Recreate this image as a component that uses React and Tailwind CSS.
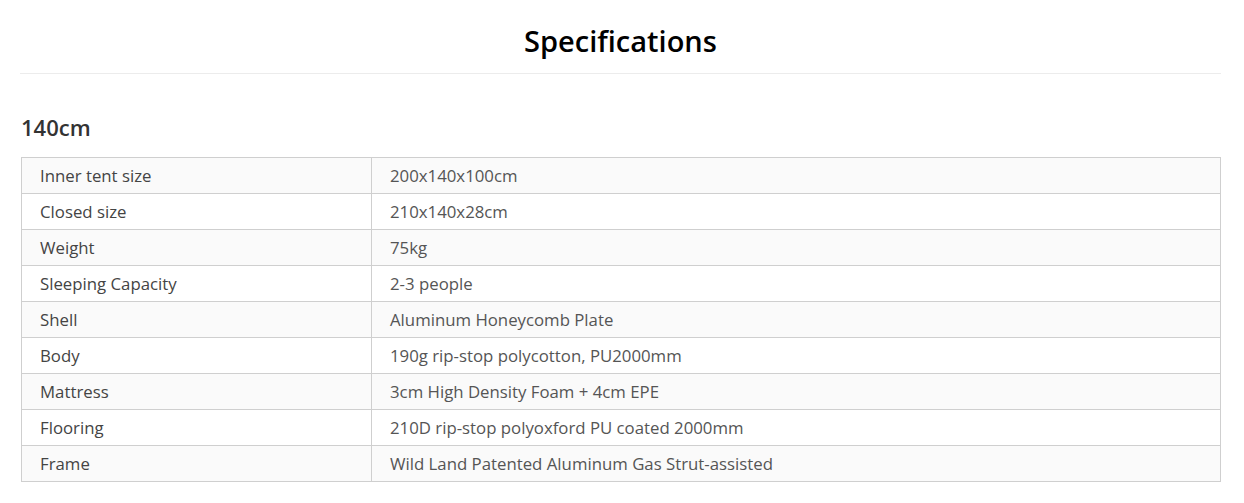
const rows = [
  ['Inner tent size', '200x140x100cm'],
  ['Closed size', '210x140x28cm'],
  ['Weight', '75kg'],
  ['Sleeping Capacity', '2-3 people'],
  ['Shell', 'Aluminum Honeycomb Plate'],
  ['Body', '190g rip-stop polycotton, PU2000mm'],
  ['Mattress', '3cm High Density Foam + 4cm EPE'],
  ['Flooring', '210D rip-stop polyoxford PU coated 2000mm'],
  ['Frame', 'Wild Land Patented Aluminum Gas Strut-assisted'],
];

export default function App() {
  return (
    <div className="bg-white pl-5 pt-[22px] pb-6" style={{ fontFamily: '"Open Sans", sans-serif' }}>
      <h2 className="w-[1201px] text-center text-[29px] leading-[38px] font-semibold text-black pb-[13px] border-b border-[#ececec]">
        Specifications
      </h2>

      <h3 className="mt-[40px] ml-[1px] text-[22px] leading-[26px] font-semibold text-[#333]">140cm</h3>

      <table className="mt-[17px] ml-[1px] w-[1200px] border-collapse text-[16.8px] text-[#555]">
        <tbody>
          {rows.map(([k, v], i) => (
            <tr key={k} className={i % 2 === 0 ? 'bg-[#fafafa]' : 'bg-white'}>
              <td className="w-[350px] border border-[#cfcfcf] pl-[18px] pt-[1px] pb-0 leading-[34px] text-[#444]">{k}</td>
              <td className="border border-[#cfcfcf] pl-[18px] pt-[1px] pb-0 leading-[34px]">{v}</td>
            </tr>
          ))}
        </tbody>
      </table>
    </div>
  );
}
